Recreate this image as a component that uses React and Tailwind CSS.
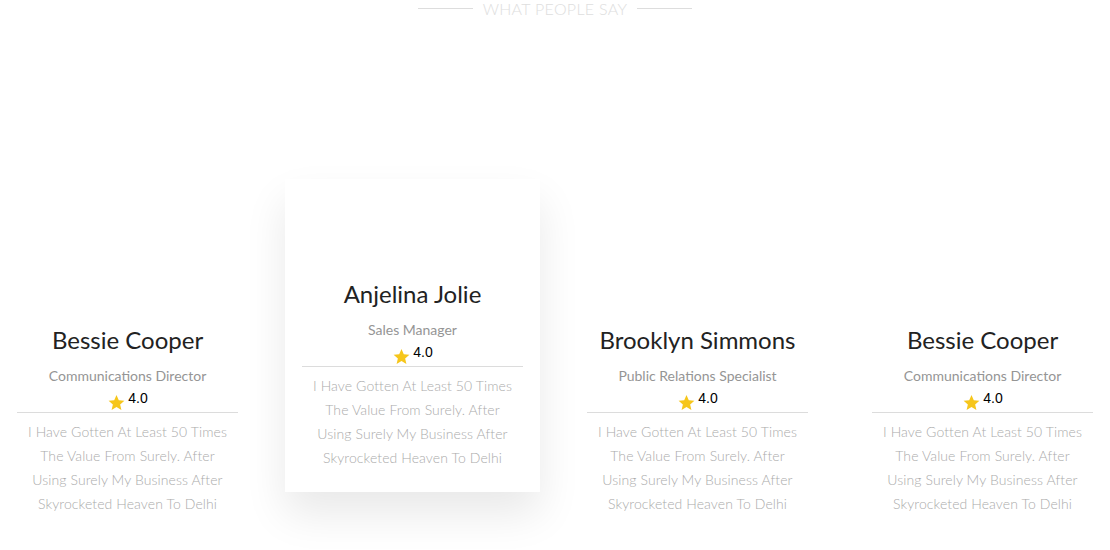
import React from "react";

const cards = [
  { name: "Bessie Cooper", role: "Communications Director", raised: false },
  { name: "Anjelina Jolie", role: "Sales Manager", raised: true },
  { name: "Brooklyn Simmons", role: "Public Relations Specialist", raised: false },
  { name: "Bessie Cooper", role: "Communications Director", raised: false },
];

const lines = [
  "I Have Gotten At Least 50 Times",
  "The Value From Surely. After",
  "Using Surely My Business After",
  "Skyrocketed Heaven To Delhi",
];

function Star() {
  return (
    <svg width="19" height="19" viewBox="0 0 24 24" className="mt-[5px]">
      <path
        d="M12 2.5l2.9 6.6 7.1.6-5.4 4.7 1.6 7-6.2-3.7-6.2 3.7 1.6-7L2 9.7l7.1-.6z"
        fill="#f6c61b"
      />
    </svg>
  );
}

function Card({ name, role, raised }) {
  return (
    <div
      className={
        "w-[255px] shrink-0 px-[17px] pt-[99px] pb-[22px] flex flex-col items-center text-center " +
        (raised
          ? "bg-white shadow-[0_22px_40px_rgba(0,0,0,0.09)]"
          : "mt-[46px]")
      }
    >
      <div className="text-[24px] leading-[32px] text-[#222] font-['Lato',sans-serif]">
        {name}
      </div>
      <div className="mt-[10px] text-[14px] leading-[20px] text-[#959595] font-['Lato',sans-serif]">
        {role}
      </div>
      <div className="mt-[2px] flex items-start justify-center gap-[2px] h-[20px]">
        <Star />
        <span className="text-[14px] leading-[20px] text-black font-['Liberation_Sans',Arial,sans-serif]">
          4.0
        </span>
      </div>
      <div className="w-full h-px bg-[#dcdcdc] mt-[4px]" />
      <div className="mt-[7px] text-[14px] leading-[24px] tracking-[0.1px] text-[#ababab] font-['Lato',sans-serif] font-light">
        {lines.map((l, i) => (
          <div key={i}>{l}</div>
        ))}
      </div>
    </div>
  );
}

export default function App() {
  return (
    <div className="w-[1110px] h-[550px] bg-white overflow-hidden">
      <div className="flex items-center justify-center gap-[10px] h-[17px]">
        <div className="w-[55px] h-px bg-[#dddddd]" />
        <div className="text-[16px] leading-[17px] tracking-[0.3px] text-[#dedede] font-['Lato',sans-serif] font-light">
          WHAT PEOPLE SAY
        </div>
        <div className="w-[55px] h-px bg-[#dddddd]" />
      </div>
      <div className="mt-[162px] flex items-start gap-[30px]">
        {cards.map((c, i) => (
          <Card key={i} {...c} />
        ))}
      </div>
    </div>
  );
}
